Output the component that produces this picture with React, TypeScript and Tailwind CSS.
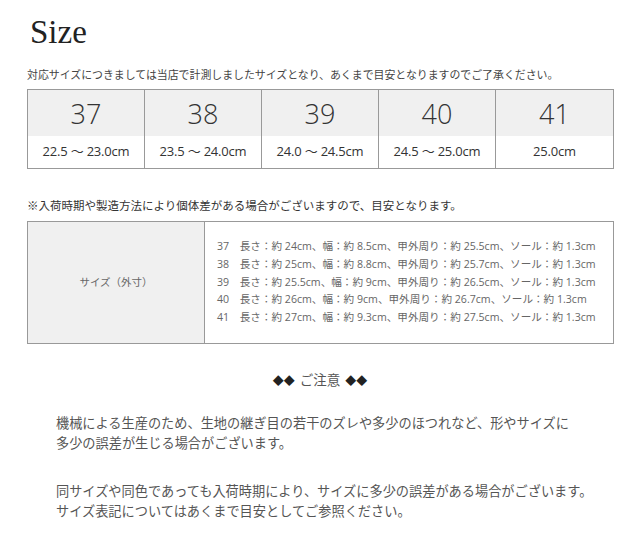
import React from "react";

const sizes = [
  { n: "37", r: "22.5 ～ 23.0cm" },
  { n: "38", r: "23.5 ～ 24.0cm" },
  { n: "39", r: "24.0 ～ 24.5cm" },
  { n: "40", r: "24.5 ～ 25.0cm" },
  { n: "41", r: "25.0cm" },
];

const details = [
  "37　長さ：約 24cm、幅：約 8.5cm、甲外周り：約 25.5cm、ソール：約 1.3cm",
  "38　長さ：約 25cm、幅：約 8.8cm、甲外周り：約 25.7cm、ソール：約 1.3cm",
  "39　長さ：約 25.5cm、幅：約 9cm、甲外周り：約 26.5cm、ソール：約 1.3cm",
  "40　長さ：約 26cm、幅：約 9cm、甲外周り：約 26.7cm、ソール：約 1.3cm",
  "41　長さ：約 27cm、幅：約 9.3cm、甲外周り：約 27.5cm、ソール：約 1.3cm",
];

const sans = { fontFamily: '"Open Sans", "Noto Sans CJK JP", sans-serif' };

export default function App() {
  return (
    <div className="w-[640px] h-[548px] bg-white text-[#444]" style={sans}>
      <div className="pt-[12px] pl-[30px] text-[33px] leading-[40px] text-[#222]" style={{ fontFamily: '"Liberation Serif", serif' }}>
        Size
      </div>
      <div className="mt-[16px] pl-[27px] text-[10.9px] leading-[14px] text-[#444]">
        対応サイズにつきましては当店で計測しましたサイズとなり、あくまで目安となりますのでご了承ください。
      </div>
      <div className="mx-[27px] mt-[7px] w-[587px] grid grid-cols-5 border border-[#999]">
        {sizes.map((s, i) => (
          <div key={s.n} className={`flex flex-col ${i < 4 ? "border-r border-[#999]" : ""}`}>
            <div className="h-[46px] bg-[#f0f0f0] flex items-center justify-center text-[27px] font-light text-[#333] pt-[2px]">
              {s.n}
            </div>
            <div className="h-[32px] flex items-center justify-center text-[13px] text-[#333] tracking-[-0.2px]">
              {s.r}
            </div>
          </div>
        ))}
      </div>
      <div className="mt-[30px] pl-[27px] text-[11.5px] leading-[14px] text-[#333]">
        ※入荷時期や製造方法により個体差がある場合がございますので、目安となります。
      </div>
      <div className="mx-[27px] mt-[8px] w-[587px] h-[123px] flex border border-[#999]">
        <div className="w-[177px] bg-[#f0f0f0] border-r border-[#999] flex items-center justify-center text-[10.5px] text-[#666]">
          サイズ（外寸）
        </div>
        <div className="flex-1 flex flex-col justify-center pl-[12px] text-[10.6px] leading-[17.8px] text-[#666]">
          {details.map((d) => (
            <div key={d} className="whitespace-nowrap">{d}</div>
          ))}
        </div>
      </div>
      <div className="mt-[28px] flex items-center justify-center gap-[5px] h-[16px] text-[#555]">
        <span className="text-[11px] leading-none text-[#222]">◆◆</span>
        <span className="text-[13.5px] leading-[16px]">ご注意</span>
        <span className="text-[11px] leading-none text-[#222]">◆◆</span>
      </div>
      <div className="mt-[25px] pl-[56px] text-[13.2px] leading-[20px] text-[#555]">
        <p>機械による生産のため、生地の継ぎ目の若干のズレや多少のほつれなど、形やサイズに</p>
        <p>多少の誤差が生じる場合がございます。</p>
        <p className="mt-[28px]">同サイズや同色であっても入荷時期により、サイズに多少の誤差がある場合がございます。</p>
        <p>サイズ表記についてはあくまで目安としてご参照ください。</p>
      </div>
    </div>
  );
}
